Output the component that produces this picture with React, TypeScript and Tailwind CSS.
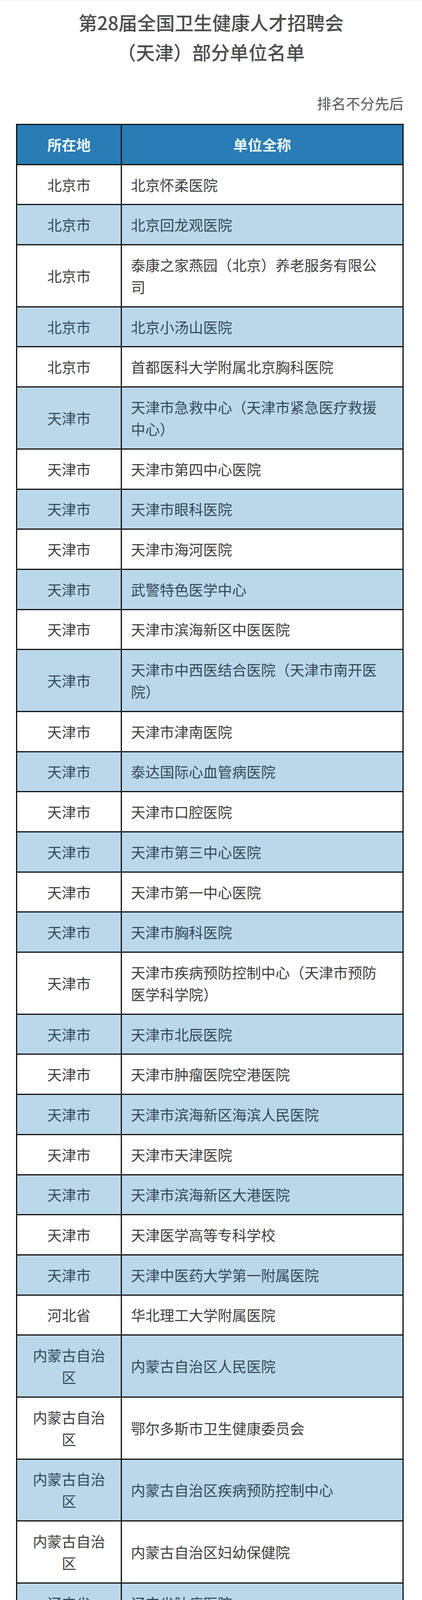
import React from 'react';

// 所在地 / 单位全称 / 是否两行
const rows: [string, string, boolean?][] = [
  ['北京市', '北京怀柔医院'],
  ['北京市', '北京回龙观医院'],
  ['北京市', '泰康之家燕园（北京）养老服务有限公司', true],
  ['北京市', '北京小汤山医院'],
  ['北京市', '首都医科大学附属北京胸科医院'],
  ['天津市', '天津市急救中心（天津市紧急医疗救援中心）', true],
  ['天津市', '天津市第四中心医院'],
  ['天津市', '天津市眼科医院'],
  ['天津市', '天津市海河医院'],
  ['天津市', '武警特色医学中心'],
  ['天津市', '天津市滨海新区中医医院'],
  ['天津市', '天津市中西医结合医院（天津市南开医院）', true],
  ['天津市', '天津市津南医院'],
  ['天津市', '泰达国际心血管病医院'],
  ['天津市', '天津市口腔医院'],
  ['天津市', '天津市第三中心医院'],
  ['天津市', '天津市第一中心医院'],
  ['天津市', '天津市胸科医院'],
  ['天津市', '天津市疾病预防控制中心（天津市预防医学科学院）', true],
  ['天津市', '天津市北辰医院'],
  ['天津市', '天津市肿瘤医院空港医院'],
  ['天津市', '天津市滨海新区海滨人民医院'],
  ['天津市', '天津市天津医院'],
  ['天津市', '天津市滨海新区大港医院'],
  ['天津市', '天津医学高等专科学校'],
  ['天津市', '天津中医药大学第一附属医院'],
  ['河北省', '华北理工大学附属医院'],
  ['内蒙古自治区', '内蒙古自治区人民医院', true],
  ['内蒙古自治区', '鄂尔多斯市卫生健康委员会', true],
  ['内蒙古自治区', '内蒙古自治区疾病预防控制中心', true],
  ['内蒙古自治区', '内蒙古自治区妇幼保健院', true],
  ['辽宁省', '辽宁省肿瘤医院'],
  ['辽宁省', '锦州医科大学'],
  ['黑龙江省', '哈尔滨医科大学附属第一医院'],
  ['黑龙江省', '黑龙江省眼科医院'],
  ['江苏省', '南通大学附属医院'],
  ['江苏省', '连云港市第一人民医院'],
  ['安徽省', '阜阳市第二人民医院'],
  ['安徽省', '安徽理工大学第一附属医院'],
  ['山东省', '青岛市中医医院（市海慈医院）'],
  ['山东省', '济南护理职业学院'],
  ['河南省', '河南省胸科医院'],
  ['广西壮族自治区', '梧州市红十字会医院', true],
  ['海南省', '海南省人民医院'],
  ['四川省', '绵阳市第三人民医院'],
  ['四川省', '四川省疾病预防控制中心'],
  ['四川省', '成都中医药大学附属医院（四川省中医医院）', true],
  ['四川省', '成都大学附属医院'],
  ['宁夏回族自治区', '银川市妇幼保健院', true],
];

const cell = 'flex items-center overflow-hidden border-r-[3px] border-b-[3px] border-[#111] leading-[56px] text-[37px]';

function Decoration() {
  return (
    <svg className="absolute left-0 bottom-0 w-[1080px] h-[500px] pointer-events-none" viewBox="0 0 1080 500">
      <defs>
        <linearGradient id="swl" x1="0" y1="0" x2="1" y2="0">
          <stop offset="0" stopColor="#5b9dd2" />
          <stop offset="1" stopColor="#7db6e0" />
        </linearGradient>
        <linearGradient id="swr" x1="0" y1="0" x2="1" y2="0">
          <stop offset="0" stopColor="#8ec4e6" />
          <stop offset="1" stopColor="#5fa6d6" />
        </linearGradient>
      </defs>
      <path d="M0 380 C18 383 34 386 48 390 L48 436 C32 433 16 431 0 429 Z" fill="url(#swl)" opacity="0.85" />
      <path d="M1030 398 Q1058 386 1080 370 L1080 392 Q1058 404 1030 414 Z" fill="url(#swr)" opacity="0.8" />
      <path d="M1030 350 Q1058 338 1080 328 L1080 338 Q1058 348 1030 358 Z" fill="#e6f4fb" opacity="0.7" />
      {[0, 1, 2, 3, 4, 5].map((i) => (
        <path
          key={i}
          d={`M${606 + i * 10} 462 Q${735} ${500 - i * 5} ${872 - i * 8} 462`}
          fill="none"
          stroke="#8cc79a"
          strokeWidth="1.3"
          opacity="0.85"
        />
      ))}
    </svg>
  );
}

export default function App() {
  return (
    <div className="relative h-[6105px] w-[1080px] overflow-hidden border-t border-[#e3e3e3] font-['Noto_Sans_CJK_SC',sans-serif] bg-[linear-gradient(to_bottom,#ffffff_0%,#ffffff_78%,#e4f2fa_87%,#c8e6f5_95%,#b2dbf0_100%)]">
      <Decoration />
      <div className="relative z-10 pt-[17px] text-center text-[48px] leading-[76px] font-medium text-[#4d4d4d]">
        <div className="h-[76px]">第28届全国卫生健康人才招聘会</div>
        <div className="h-[76px]">（天津）部分单位名单</div>
      </div>
      <div className="relative z-10 mt-[70px] ml-[41px] h-[48px] w-[992px] text-right text-[37px] leading-[48px] text-[#555555]">
        排名不分先后
      </div>
      <div className="relative z-10 mt-[29px] ml-[41px] grid w-[992px] grid-cols-[268px_721px] border-l-[3px] border-t-[3px] border-[#111]">
        <div className={`${cell} h-[102.7px] justify-center bg-[#2a7cb4] font-bold text-[#e8f7fa]`}>
          <span>所在地</span>
        </div>
        <div className={`${cell} h-[102.7px] justify-center bg-[#2a7cb4] font-bold text-[#e8f7fa]`}>
          <span>单位全称</span>
        </div>
        {rows.map(([place, name, tall], i) => {
          const tone = i % 2 === 0 ? 'bg-white text-[#404040]' : 'bg-[#bad8ea] text-[#35495a]';
          const height = tall ? 'h-[158.7px]' : 'h-[102.7px]';
          return (
            <React.Fragment key={i}>
              <div className={`${cell} ${tone} ${height} justify-center px-[28px]`}>
                <span className="text-center">{place}</span>
              </div>
              <div className={`${cell} ${tone} ${height} pl-[23px] pr-[45px]`}>
                <span>{name}</span>
              </div>
            </React.Fragment>
          );
        })}
      </div>
    </div>
  );
}
